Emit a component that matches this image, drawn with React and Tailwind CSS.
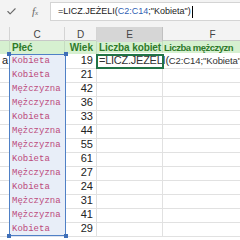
import React from 'react'
import { Check } from 'lucide-react'

const rows = [
  ['Kobieta', 19],
  ['Kobieta', 21],
  ['Mężczyzna', 42],
  ['Mężczyzna', 36],
  ['Kobieta', 33],
  ['Mężczyzna', 44],
  ['Mężczyzna', 55],
  ['Kobieta', 61],
  ['Mężczyzna', 27],
  ['Kobieta', 24],
  ['Mężczyzna', 31],
  ['Mężczyzna', 41],
  ['Kobieta', 29],
]

const cols = 'grid grid-cols-[10px_55px_32px_66px_100px]'

export default function App() {
  return (
    <div className="relative w-[240px] h-[240px] overflow-hidden bg-white font-['Liberation_Sans',Arial,sans-serif] text-[#222]">
      {/* formula bar */}
      <div className="h-[27px] bg-[#f3f3f3] flex items-start pt-[2px]">
        <div className="w-[50px] h-[19px] flex items-center">
          <Check size={11} strokeWidth={2.4} className="ml-[6px] text-[#6a6a6a]" />
          <span className="ml-[15px] font-['Liberation_Serif',serif] italic text-[11px] text-[#666] leading-none">
            f<span className="text-[7px]">x</span>
          </span>
        </div>
        <div className="flex-1 h-[19px] bg-white border border-[#d4d4d4] border-r-0 flex items-center pl-[7px] text-[9px] whitespace-nowrap">
          <span>=LICZ.JEŻELI(</span>
          <span className="text-[#2f5fb3]">C2:C14</span>
          <span>;"Kobieta")</span>
          <span className="inline-block w-[1px] h-[12px] bg-black ml-[1px]" />
        </div>
      </div>

      {/* column letters */}
      <div className={`${cols} h-[14px] bg-[#f3f3f3] text-[10px] text-[#444] border-b border-[#c8c8c8]`}>
        <div className="border-r border-[#d4d4d4]" />
        <div className="border-r border-[#d4d4d4] flex items-center justify-center">C</div>
        <div className="border-r border-[#d4d4d4] flex items-center justify-center">D</div>
        <div className="border-r border-[#c0c0c0] bg-[#d6d6d6] flex items-center justify-center">E</div>
        <div className="border-r border-[#d4d4d4] flex items-center justify-center">F</div>
      </div>

      {/* header row */}
      <div className={`${cols} h-[13px] bg-[#d6f0d0] text-[10px] font-bold text-[#2e7a2a] leading-[13px] whitespace-nowrap`}>
        <div className="border-r border-[#c5dcc0]" />
        <div className="border-r border-[#c5dcc0] pl-[2px]">Płeć</div>
        <div className="border-r border-[#c5dcc0] text-right pr-[3px]">Wiek</div>
        <div className="border-r border-[#c5dcc0] pl-[2px] tracking-[-0.1px]">Liczba kobiet</div>
        <div className="pl-[1px] text-[9.5px] tracking-[-0.5px]">Liczba mężczyzn</div>
      </div>

      {/* data rows */}
      {rows.map(([sex, age], i) => (
        <div key={i} className={`${cols} h-[14px] leading-[13px]`}>
          <div className="border-b border-r border-[#e1e1e1] text-[11px] text-right pr-[1px] overflow-hidden">
            {i === 0 ? 'a' : ''}
          </div>
          <div className="bg-[#e8eef8] border-b border-[#dde3ee] pl-[2px] font-['Liberation_Mono',monospace] text-[9px] text-[#bc4a7c] leading-[14px]">
            {sex}
          </div>
          <div className="border-b border-r border-[#e1e1e1] text-right pr-[3px] text-[11px]">{age}</div>
          <div className="relative border-b border-r border-[#e1e1e1]">
            {i === 0 && (
              <span className="absolute left-[2px] top-[-1px] z-10 whitespace-nowrap text-[11px] text-[#333] bg-white leading-[14px] tracking-[-0.25px]">
                =LICZ.JEŻELI(<span className="text-[9.5px] tracking-[-0.1px]">C2:C14;"Kobieta")</span>
              </span>
            )}
          </div>
          <div className="border-b border-r border-[#e1e1e1]" />
        </div>
      ))}

      {/* range highlight C2:C14 */}
      <div className="absolute left-[9px] top-[54px] w-[57px] h-[182px] border-[1.5px] border-[#4f80c6] pointer-events-none">
        <div className="absolute left-[-3px] top-[-3px] w-[4px] h-[4px] bg-[#3f6fb8]" />
        <div className="absolute right-[-3px] top-[-3px] w-[4px] h-[4px] bg-[#3f6fb8]" />
        <div className="absolute left-[-3px] bottom-[-3px] w-[4px] h-[4px] bg-[#3f6fb8]" />
        <div className="absolute right-[-3px] bottom-[-3px] w-[4px] h-[4px] bg-[#3f6fb8]" />
      </div>

      {/* active cell E2 */}
      <div className="absolute left-[96px] top-[54px] w-[68px] h-[15px] border-2 border-[#217346] z-20 pointer-events-none" />
    </div>
  )
}
